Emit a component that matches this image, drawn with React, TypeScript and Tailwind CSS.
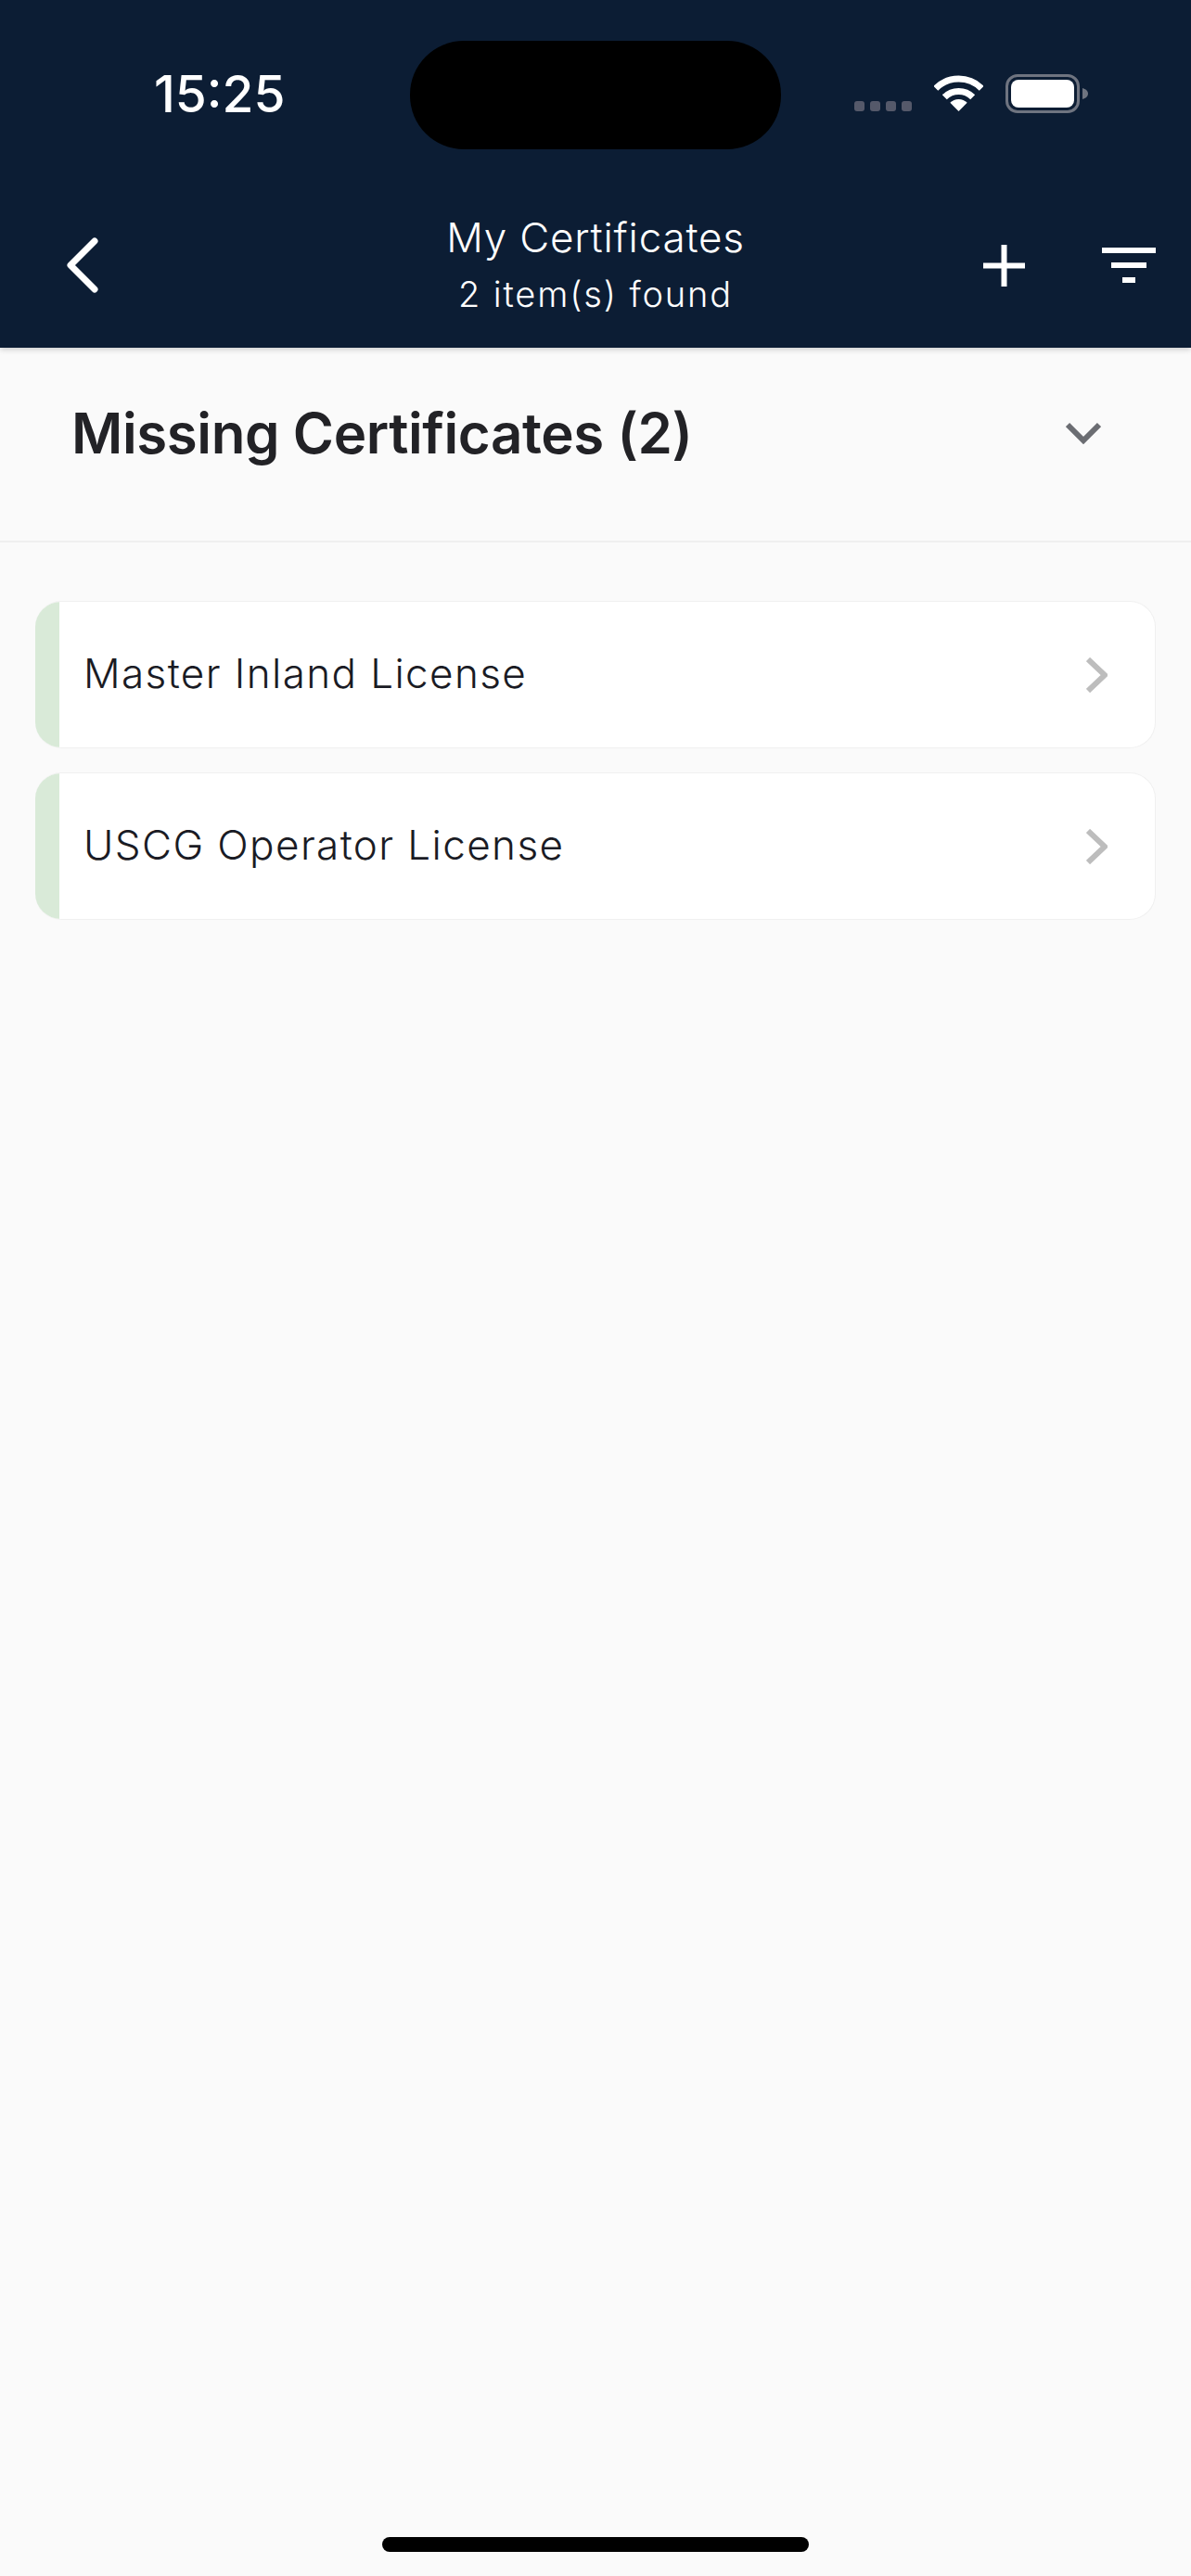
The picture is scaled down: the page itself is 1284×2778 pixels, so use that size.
const font = { fontFamily: "Inter, 'Noto Sans', sans-serif" };

function Wifi() {
  return (
    <svg width="53" height="39" viewBox="0 0 53 39" fill="none" stroke="white" strokeWidth="7">
      <path d="M1.8 14.3A35 35 0 0 1 51.2 14.3" />
      <path d="M11.3 23.8A21.5 21.5 0 0 1 41.7 23.8" />
      <path d="M26.5 39L17.3 29.8A13 13 0 0 1 35.7 29.8Z" fill="white" stroke="none" />
    </svg>
  );
}

function Battery() {
  return (
    <div className="flex items-center">
      <div className="flex h-[42px] w-[80px] items-center justify-center rounded-[13px] border-[3px] border-[#6f7480]">
        <div className="h-[30px] w-[68px] rounded-[8px] bg-white" />
      </div>
      <svg width="6" height="12" viewBox="0 0 6 12" className="ml-[3px]">
        <path d="M0 0C3.5 1 6 3 6 6C6 9 3.5 11 0 12Z" fill="#6f7480" />
      </svg>
    </div>
  );
}

function StatusBar() {
  return (
    <div className="flex items-start pl-[166px] pt-[44px]">
      <div className="flex h-[115px] w-[276px] items-center text-[55px] font-medium leading-none text-white">15:25</div>
      <div className="h-[117px] w-[400px] rounded-[58px] bg-black" />
      <div className="ml-[79px] -mt-[2px] flex h-[117px] items-center">
        <div className="mt-[28px] flex gap-[6px]">
          <span className="h-[11px] w-[11px] rounded-[3px] bg-[#55596a]" />
          <span className="h-[11px] w-[11px] rounded-[3px] bg-[#55596a]" />
          <span className="h-[11px] w-[11px] rounded-[3px] bg-[#55596a]" />
          <span className="h-[11px] w-[11px] rounded-[3px] bg-[#55596a]" />
        </div>
        <div className="ml-[24px] mr-[24px]"><Wifi /></div>
        <Battery />
      </div>
    </div>
  );
}

function NavBar() {
  return (
    <div className="mt-[65px] flex h-[120px] items-center">
      <div className="w-[240px] pl-[72px]">
        <svg width="34" height="60" viewBox="0 0 34 60" fill="none" stroke="white" strokeWidth="7" strokeLinecap="round" strokeLinejoin="round" className="block">
          <path d="M30 4L4 30L30 56" />
        </svg>
      </div>
      <div className="flex-1 text-center font-light text-white">
        <div className="text-[44px] leading-[62px] tracking-[0.8px]">My Certificates</div>
        <div className="text-[38px] leading-[60px] tracking-[1.85px]">2 item(s) found</div>
      </div>
      <div className="flex w-[240px] items-center pl-[16px]">
        <svg width="45" height="45" viewBox="0 0 45 45" fill="white" className="block">
          <rect x="0" y="19.5" width="45" height="6" />
          <rect x="19.5" y="0" width="6" height="45" />
        </svg>
        <svg width="58" height="38" viewBox="0 0 58 38" fill="white" className="ml-[83px] block">
          <rect x="0" y="0" width="58" height="6" />
          <rect x="10" y="16" width="38" height="6" />
          <rect x="22" y="32" width="14" height="6" />
        </svg>
      </div>
    </div>
  );
}

function CertificateRow({ name }: { name: string }) {
  return (
    <div className="flex h-[159px] items-center overflow-hidden rounded-[28px] border border-[#f0f0f0] border-l-0 bg-white">
      <div className="h-full w-[26px] shrink-0 bg-[#d9ead8]" />
      <div className="flex-1 pb-[3px] pl-[26px] text-[44px] font-light tracking-[1.4px] text-[#1a1b24]">{name}</div>
      <svg width="23" height="38" viewBox="0 0 23 38" fill="none" stroke="#bdbdbd" strokeWidth="6" className="mr-[51px] block">
        <path d="M2 2L20 19L2 36" />
      </svg>
    </div>
  );
}

export default function App() {
  return (
    <div style={font} className="relative flex h-[2778px] w-[1284px] flex-col overflow-hidden bg-[#fafafa]">
      <header className="relative z-10 h-[375px] shrink-0 bg-[#0c1d34] shadow-[0_2px_6px_rgba(0,0,0,0.18)]">
        <StatusBar />
        <NavBar />
      </header>

      <section className="flex h-[210px] shrink-0 items-center justify-between border-b-2 border-[#efefef] pl-[77px] pr-[97px] pb-[25px]">
        <h1 className="text-[60px] font-semibold leading-none tracking-[-0.4px] text-[#222226]">Missing Certificates (2)</h1>
        <svg width="38" height="24" viewBox="0 0 38 24" fill="none" stroke="#6b6d72" strokeWidth="6" className="block">
          <path d="M2 3L19 20L36 3" />
        </svg>
      </section>

      <main className="flex flex-col gap-[26px] pl-[38px] pr-[38px] pt-[63px]">
        <CertificateRow name="Master Inland License" />
        <CertificateRow name="USCG Operator License" />
      </main>

      <div className="mt-auto mb-[26px] h-[16px] w-[460px] shrink-0 self-center rounded-full bg-black" />
    </div>
  );
}
